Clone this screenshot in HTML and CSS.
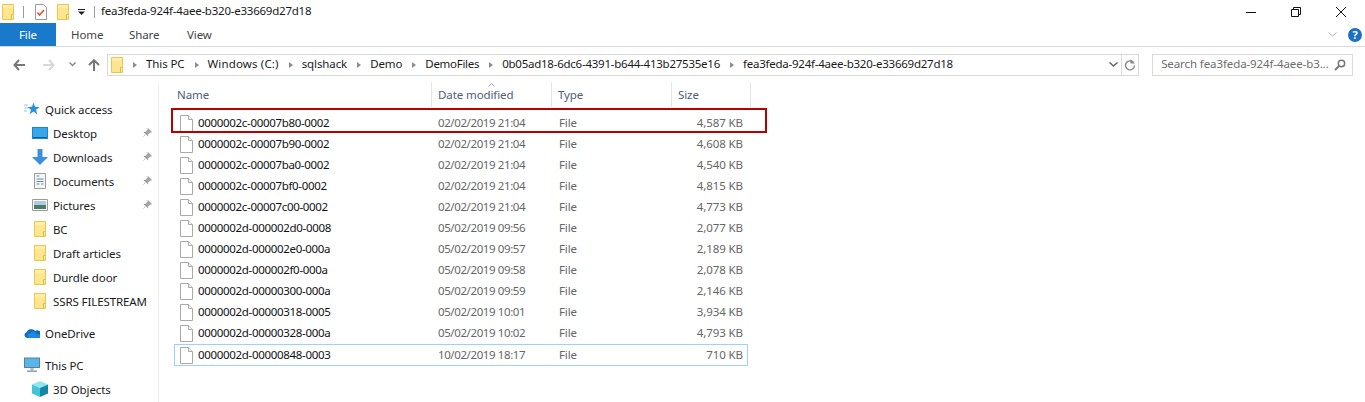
FILE: index.html
```html
<!DOCTYPE html>
<html lang="en">
<head>
<meta charset="utf-8">
<title>File Explorer</title>
<link rel="stylesheet" href="styles.css">
</head>
<body>
<svg class="defs" width="0" height="0" aria-hidden="true">
  <symbol id="folder" viewBox="0 0 12 16">
    <path d="M.5.5h11v15H.5z" fill="#fde68f" stroke="#eac64d"/>
    <path d="M1 1h10v3H1z" fill="#ffedaa"/>
    <path d="M9.5 15.5V10.5h2" fill="#fff1b8" stroke="#e2b93f"/>
  </symbol>
  <symbol id="file" viewBox="0 0 13 17">
    <path d="M.5.5h8l4 4v12H.5z" fill="#fff" stroke="#a9a9a9"/>
    <path d="M8.5.5v4h4" fill="#f1f1f1" stroke="#a9a9a9"/>
  </symbol>
  <symbol id="pin" viewBox="0 0 10 10">
    <path d="M6 0l4 4-1 .7-.7-.2L6.200 6.600 6 8.500 1.500 4 3.500 3.800 5.500 1.700 5.300 1z" fill="#a3a3a3"/>
    <path d="M3 6.500L.5 9.500 3.500 7z" fill="#a3a3a3"/>
  </symbol>
</svg>

<header class="titlebar">
  <svg class="ic-folder"><use href="#folder"/></svg>
  <span class="qsep first"></span>
  <svg class="ic-check" viewBox="0 0 12 16">
    <path d="M.5.500h8l3 3v12H.5z" fill="#fff" stroke="#9a9a9a"/>
    <path d="M2.500 8.500l2 2.500 4.500-5" fill="none" stroke="#e2552c" stroke-width="1.600"/>
  </svg>
  <svg class="ic-folder second"><use href="#folder"/></svg>
  <svg class="ic-drop" viewBox="0 0 7 6"><path d="M0 0h7v1H0zM0 2.500h7L3.500 6z" fill="#222"/></svg>
  <span class="qsep"></span>
  <span class="title">fea3feda-924f-4aee-b320-e33669d27d18</span>
  <div class="winctl">
    <svg class="wc" viewBox="0 0 10 10"><path d="M0 5.500h10" stroke="#111" fill="none"/></svg>
    <svg class="wc" viewBox="0 0 10 10"><path d="M.5 2.500h7v7h-7zM2.500 2.500v-2h7v7h-2" stroke="#111" fill="none"/></svg>
    <svg class="wc" viewBox="0 0 10 10"><path d="M0 0l10 10M10 0L0 10" stroke="#111" fill="none"/></svg>
  </div>
</header>

<nav class="tabs">
  <span class="tab file">File</span>
  <span class="tab home">Home</span>
  <span class="tab share">Share</span>
  <span class="tab view">View</span>
  <div class="tabs-right">
    <svg class="collapse" viewBox="0 0 9 5"><path d="M.5.500l4 3.500 4-3.500" fill="none" stroke="#b5b5b5"/></svg>
    <span class="help">?</span>
  </div>
</nav>

<div class="addressbar">
  <svg class="nv back" viewBox="0 0 12 12"><path d="M6 1L1.500 6 6 11M2 6h10" fill="none" stroke="#777" stroke-width="2"/></svg>
  <svg class="nv fwd" viewBox="0 0 12 12"><path d="M6 1l4.500 5L6 11M10 6H0" fill="none" stroke="#d8d8d8" stroke-width="2"/></svg>
  <svg class="nv-down" viewBox="0 0 7 5"><path d="M.5.500L3.500 3.500 6.500.500" fill="none" stroke="#8a8a8a" stroke-width="1.500"/></svg>
  <svg class="nv up" viewBox="0 0 12 12"><path d="M1 6l5-4.800L11 6M6 2v10" fill="none" stroke="#777" stroke-width="2"/></svg>
  <div class="pathbox">
    <svg class="ic-folder"><use href="#folder"/></svg>
    <ol class="crumbs">
      <li>This PC</li>
      <li class="wide">Windows (C:)</li>
      <li>sqlshack</li>
      <li>Demo</li>
      <li class="tight">DemoFiles</li>
      <li class="hash">0b05ad18-6dc6-4391-b644-413b27535e16</li>
      <li class="hash">fea3feda-924f-4aee-b320-e33669d27d18</li>
    </ol>
    <span class="path-drop"><svg viewBox="0 0 9 5"><path d="M.5.500l4 3.500 4-3.500" fill="none" stroke="#666" stroke-width="1.500"/></svg></span>
    <span class="path-refresh"><svg viewBox="0 0 12 12"><path d="M9.500 3.500A4.500 4.500 0 1 0 10.500 6.500" fill="none" stroke="#888" stroke-width="1.400"/><path d="M6.500 0v4.500H11z" fill="#888"/></svg></span>
  </div>
  <div class="searchbox">
    <span class="search-text">Search fea3feda-924f-4aee-b3...</span>
    <svg viewBox="0 0 12 12"><circle cx="7.500" cy="4.500" r="3.200" fill="none" stroke="#777" stroke-width="1.500"/><path d="M5 7l-4 4" stroke="#777" stroke-width="2"/></svg>
  </div>
</div>

<main class="content">
  <aside class="navpane">
    <div class="nav-item top">
      <svg class="nic" viewBox="0 0 16 16"><path d="M9.500 1.500l1.500 4.200 4.500.2-3.500 2.800 1.300 4.500-3.800-2.600-3.800 2.600 1.300-4.500L3.500 5.900l4.500-.2z" fill="#2b90d9"/><path d="M0 4h4M1 7h3M0 10h3" stroke="#8cc6ee"/></svg>
      <span>Quick access</span>
    </div>
    <div class="nav-item sub">
      <svg class="nic" viewBox="0 0 16 12"><path d="M0 0h16v12H0z" fill="#1a86d6"/><path d="M1 1h14v9H1z" fill="#37a6ec"/><path d="M1 10h14v1H1z" fill="#0e5d9e"/></svg>
      <span>Desktop</span><svg class="pin"><use href="#pin"/></svg>
    </div>
    <div class="nav-item sub">
      <svg class="nic" viewBox="0 0 16 16"><path d="M5.500 0h5v8H16l-8 8-8-8h5.500z" fill="#3c8fdc"/></svg>
      <span>Downloads</span><svg class="pin"><use href="#pin"/></svg>
    </div>
    <div class="nav-item sub">
      <svg class="nic" viewBox="0 0 16 16"><path d="M2.500.500h11v15h-11z" fill="#f6f6f6" stroke="#9c9c9c"/><path d="M4.500 3h3M4.500 6h7M4.500 8.500h7M4.500 11h3M9 11h2.500" stroke="#5f8fa8"/></svg>
      <span>Documents</span><svg class="pin"><use href="#pin"/></svg>
    </div>
    <div class="nav-item sub">
      <svg class="nic" viewBox="0 0 16 12"><path d="M.5.500h15v11H.5z" fill="#fff" stroke="#9c9c9c"/><path d="M2 2h12v4H2z" fill="#a9cde6"/><path d="M2 6h12v4H2z" fill="#4e7d62"/></svg>
      <span>Pictures</span><svg class="pin"><use href="#pin"/></svg>
    </div>
    <div class="nav-item sub"><svg class="nic folder-ic"><use href="#folder"/></svg><span>BC</span></div>
    <div class="nav-item sub"><svg class="nic folder-ic"><use href="#folder"/></svg><span>Draft articles</span></div>
    <div class="nav-item sub"><svg class="nic folder-ic"><use href="#folder"/></svg><span>Durdle door</span></div>
    <div class="nav-item sub"><svg class="nic folder-ic"><use href="#folder"/></svg><span>SSRS FILESTREAM</span></div>
    <div class="nav-item top gap">
      <svg class="nic" viewBox="0 0 16 11"><path d="M3 10.500a3 3 0 0 1-.5-5.800A5 5 0 0 1 11 3.500a3.500 3.500 0 0 1 4.500 7z" fill="#0f6cbd"/><path d="M5 10.500a2.500 2.500 0 0 1 1-4.800 4 4 0 0 1 7 1.200 2 2 0 0 1 2 3.600z" fill="#1a8ae0"/></svg>
      <span>OneDrive</span>
    </div>
    <div class="nav-item top gap">
      <svg class="nic" viewBox="0 0 16 15"><path d="M0 0h16v10.500H0z" fill="#5f7f98"/><path d="M1 1h14v8.500H1z" fill="#5ab4ec"/><path d="M6.500 10.500h3V13h-3z" fill="#a8b6c0"/><path d="M3 13h10v1.500H3z" fill="#8fa0ac"/></svg>
      <span>This PC</span>
    </div>
    <div class="nav-item sub">
      <svg class="nic" viewBox="0 0 16 16"><path d="M8 0l8 3.500-8 3.500L0 3.500z" fill="#8fe6ee"/><path d="M0 3.500L8 7v9l-8-3.500z" fill="#44c4d8"/><path d="M16 3.500L8 7v9l8-3.500z" fill="#1186a8"/></svg>
      <span>3D Objects</span>
    </div>
  </aside>

  <section class="files">
    <div class="head">
      <span class="hcell">Name</span>
      <span class="hcell">Date modified<svg class="sort" viewBox="0 0 7 4"><path d="M.5 3.500L3.500.500l3 3" fill="none" stroke="#9aa5b1"/></svg></span>
      <span class="hcell">Type</span>
      <span class="hcell">Size</span>
    </div>
    <div class="rows">
      <div class="row"><svg class="fic"><use href="#file"/></svg><span class="n">0000002c-00007b80-0002</span><span class="d">02/02/2019 21:04</span><span class="t">File</span><span class="s">4,587 KB</span></div>
      <div class="row"><svg class="fic"><use href="#file"/></svg><span class="n">0000002c-00007b90-0002</span><span class="d">02/02/2019 21:04</span><span class="t">File</span><span class="s">4,608 KB</span></div>
      <div class="row"><svg class="fic"><use href="#file"/></svg><span class="n">0000002c-00007ba0-0002</span><span class="d">02/02/2019 21:04</span><span class="t">File</span><span class="s">4,540 KB</span></div>
      <div class="row"><svg class="fic"><use href="#file"/></svg><span class="n">0000002c-00007bf0-0002</span><span class="d">02/02/2019 21:04</span><span class="t">File</span><span class="s">4,815 KB</span></div>
      <div class="row"><svg class="fic"><use href="#file"/></svg><span class="n">0000002c-00007c00-0002</span><span class="d">02/02/2019 21:04</span><span class="t">File</span><span class="s">4,773 KB</span></div>
      <div class="row"><svg class="fic"><use href="#file"/></svg><span class="n">0000002d-000002d0-0008</span><span class="d">05/02/2019 09:56</span><span class="t">File</span><span class="s">2,077 KB</span></div>
      <div class="row"><svg class="fic"><use href="#file"/></svg><span class="n">0000002d-000002e0-000a</span><span class="d">05/02/2019 09:57</span><span class="t">File</span><span class="s">2,189 KB</span></div>
      <div class="row"><svg class="fic"><use href="#file"/></svg><span class="n">0000002d-000002f0-000a</span><span class="d">05/02/2019 09:58</span><span class="t">File</span><span class="s">2,078 KB</span></div>
      <div class="row"><svg class="fic"><use href="#file"/></svg><span class="n">0000002d-00000300-000a</span><span class="d">05/02/2019 09:59</span><span class="t">File</span><span class="s">2,146 KB</span></div>
      <div class="row"><svg class="fic"><use href="#file"/></svg><span class="n">0000002d-00000318-0005</span><span class="d">05/02/2019 10:01</span><span class="t">File</span><span class="s">3,934 KB</span></div>
      <div class="row"><svg class="fic"><use href="#file"/></svg><span class="n">0000002d-00000328-000a</span><span class="d">05/02/2019 10:02</span><span class="t">File</span><span class="s">4,793 KB</span></div>
      <div class="row current"><svg class="fic"><use href="#file"/></svg><span class="n">0000002d-00000848-0003</span><span class="d">10/02/2019 18:17</span><span class="t">File</span><span class="s">710 KB</span></div>
      <div class="callout"></div>
    </div>
  </section>
</main>
</body>
</html>
```
FILE: styles.css
```css
* { box-sizing: border-box; }
html, body { margin: 0; height: 402px; overflow: hidden; background: #fff; }
body {
  font-family: "Noto Sans", "Open Sans", sans-serif;
  font-size: 11.5px;
  letter-spacing: -0.1px;
  color: #1a1a1a;
  display: flex;
  flex-direction: column;
}
.defs { position: absolute; }
svg { display: block; flex: none; }

/* title bar */
.titlebar { height: 23px; display: flex; align-items: center; padding-left: 2px; flex: none; }
.ic-folder { width: 12px; height: 16px; }
.qsep { width: 1px; height: 12px; background: #9a9a9a; margin-left: 9px; }
.ic-check { width: 12px; height: 16px; margin-left: 11px; }
.ic-folder.second { margin-left: 10px; }
.ic-drop { width: 7px; height: 6px; margin-left: 9px; }
.qsep:not(.first) { margin-left: 9px; }
.title { margin-left: 6px; margin-top: -2px; letter-spacing: -0.23px; }
.winctl { margin-left: auto; display: flex; gap: 35px; padding-right: 19px; }
.wc { width: 10px; height: 10px; }

/* ribbon tabs */
.tabs {
  height: 24px; flex: none; display: flex; align-items: center;
  border-bottom: 1px solid #dadbdc; color: #444;
}
.tab { display: block; }
.file {
  width: 56px; height: 23px; background: #1979ca; color: #fff;
  display: flex; align-items: center; justify-content: center;
}
.home { margin-left: 15px; width: 58px; }
.share { width: 58px; }
.view { width: 40px; }
.tabs-right { margin-left: auto; display: flex; align-items: center; gap: 11px; padding-right: 3px; }
.collapse { width: 9px; height: 5px; }
.help {
  width: 14px; height: 14px; border-radius: 50%; background: #1b72c4; color: #fff;
  font-weight: 700; font-size: 11px; display: flex; align-items: center; justify-content: center;
}

/* address bar */
.addressbar { height: 35px; flex: none; display: flex; align-items: center; padding: 0 12px 0 13px; }
.nv { width: 12px; height: 12px; }
.fwd { margin-left: 18px; }
.nv-down { width: 7px; height: 5px; margin-left: 14px; }
.up { margin-left: 12px; }
.pathbox {
  margin-left: 7px; width: 1033px; height: 22px; border: 1px solid #d9d9d9;
  display: flex; align-items: center; padding-left: 3px;
}
.crumbs { list-style: none; margin: -2px 0 0; padding: 0; display: flex; flex: 1; min-width: 0; }
.crumbs li { display: flex; align-items: center; white-space: nowrap; }
.crumbs li::before {
  content: ""; width: 0; height: 0; margin: 2px 9px 0 10px;
  border-left: 4px solid #8d8d8d; border-top: 3px solid transparent; border-bottom: 3px solid transparent;
}
.crumbs .wide { letter-spacing: 0.15px; }
.crumbs .tight { letter-spacing: -0.3px; }
.crumbs .hash { letter-spacing: -0.24px; }
.path-drop { width: 16px; height: 100%; display: flex; align-items: center; justify-content: center; border-right: 1px solid #d9d9d9; }
.path-drop svg { width: 9px; height: 5px; }
.path-refresh { width: 16px; display: flex; justify-content: center; }
.path-refresh svg { width: 12px; height: 12px; }
.searchbox {
  margin-left: 13px; width: 201px; height: 22px; border: 1px solid #d9d9d9;
  display: flex; align-items: center; justify-content: space-between; padding: 0 6px 0 8px; color: #6d6d6d;
}
.search-text { margin-top: -2px; }
.searchbox svg { width: 12px; height: 12px; }

/* content */
.content { flex: 1; min-height: 0; display: flex; overflow: hidden; }
.navpane { width: 159px; flex: none; border-right: 1px solid #f0f0f0; padding-top: 15px; }
.nav-item { height: 24px; display: flex; align-items: center; white-space: nowrap; }
.nav-item.top { padding-left: 24px; }
.nav-item.sub { padding-left: 32px; }
.nav-item.gap { margin-top: 8px; }
.nic { width: 16px; height: 16px; margin-right: 5px; }
.folder-ic { padding: 0; width: 12px; margin-left: 2px; margin-right: 7px; }
.nav-item > svg[viewBox="0 0 16 12"] { height: 12px; }
.pin { width: 10px; height: 10px; margin-left: auto; margin-right: 6px; }
.nav-item.sub { padding-right: 0; }

.files { flex: 1; padding-left: 15px; min-width: 0; }
.head {
  margin-top: 0; height: 25px; width: 577px; display: grid;
  grid-template-columns: 258px 120px 120px 79px; color: #4c607a;
}
.hcell { display: flex; align-items: center; padding-left: 3px; height: 25px; border-right: 1px solid #e5e5e5; position: relative; }
.hcell:first-child { padding-left: 3px; }
.hcell + .hcell { padding-left: 6px; }
.sort { position: absolute; width: 7px; height: 4px; left: 56px; top: 1px; }
.rows { position: relative; padding-top: 6px; }
.row {
  width: 574px; height: 21px; display: grid; align-items: center;
  grid-template-columns: 23px 234px 120px 120px 77px;
  border: 1px solid transparent; color: #666;
}
.row span { margin-top: -2px; }
.row .fic { width: 13px; height: 17px; margin-left: 5px; }
.row .n { color: #111; white-space: nowrap; letter-spacing: -0.32px; }
.row .d { padding-left: 6px; letter-spacing: -0.4px; }
.row .t { padding-left: 7px; }
.row .s { text-align: right; padding-right: 6px; }
.row.current { border-color: #99d1ff; height: 22px; }
.callout {
  position: absolute; left: -3px; top: 1px; width: 596px; height: 25px;
  border: 2px solid #b80000; pointer-events: none;
}
```
